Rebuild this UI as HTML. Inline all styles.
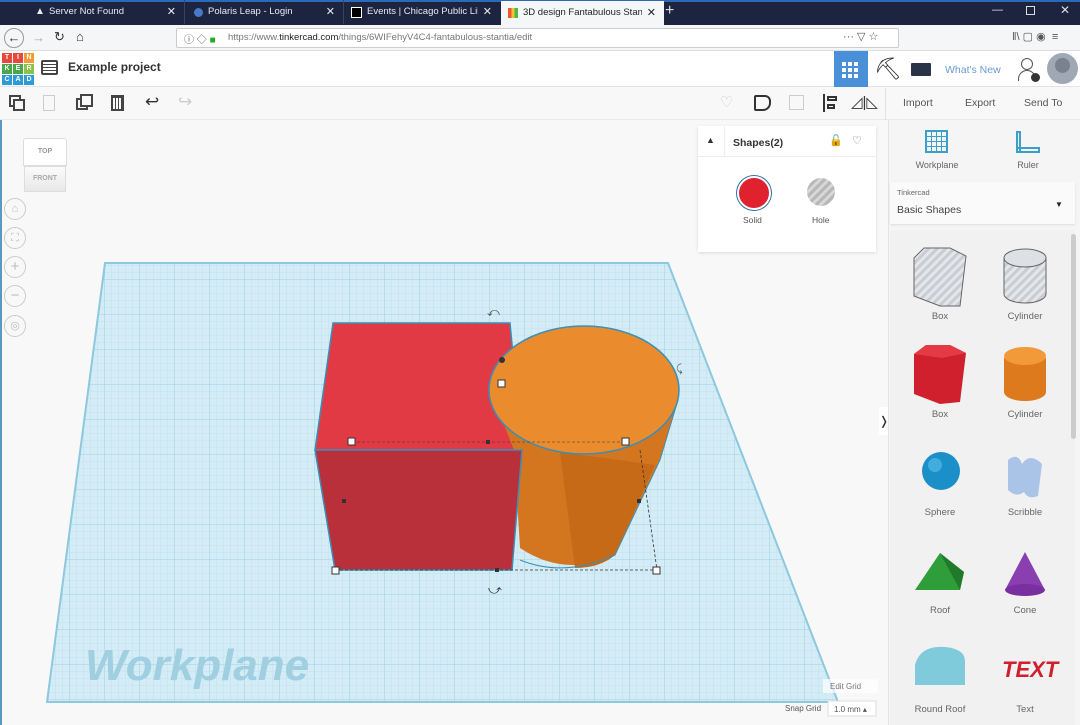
<!DOCTYPE html>
<html><head><meta charset="utf-8"><style>
*{box-sizing:border-box;margin:0;padding:0}
body{width:1080px;height:725px;overflow:hidden;font-family:"Liberation Sans",sans-serif;background:#f8f8f9;position:relative;font-size:11px;color:#333}
.abs{position:absolute}
.tab{position:absolute;top:0;height:24px;color:#e8eaf0;font-size:9.5px;line-height:24px;padding-left:22px;overflow:hidden;white-space:nowrap}
.tab .t{display:inline-block;overflow:hidden;width:calc(100% - 22px);vertical-align:top}
.tab .x{position:absolute;right:8px;top:0;font-size:11px}
.btn{position:absolute;color:#555;font-size:10.5px}
.lbl{position:absolute;font-size:9.5px;color:#666;text-align:center;width:80px}
</style></head><body>
<div class="abs" style="left:0;top:0;width:1080px;height:25px;background:#1d2440"></div>
<div class="abs" style="left:0;top:0;width:1080px;height:2px;background:#2a6ab8"></div>
<div class="tab" style="left:27px;width:158px;border-right:1px solid #3a4260"><span class="t">Server Not Found</span><span class="x">✕</span></div>
<div class="abs" style="left:35px;top:6px;color:#e8eaf0;font-size:10px">▲</div>
<div class="tab" style="left:186px;width:158px;border-right:1px solid #3a4260"><span class="t">Polaris Leap - Login</span><span class="x">✕</span></div>
<div class="abs" style="left:194px;top:8px;width:9px;height:9px;border-radius:50%;background:#4a78c8"></div>
<div class="tab" style="left:345px;width:155px"><span class="t">Events | Chicago Public Library</span><span class="x">✕</span></div>
<div class="abs" style="left:351px;top:7px;width:11px;height:11px;background:#000;border:1px solid #fff"></div>
<div class="tab" style="left:501px;width:163px;background:#f5f6f7;color:#222;top:1px;height:24px"><span class="t">3D design Fantabulous Stantia</span><span class="x">✕</span></div>
<div class="abs" style="left:508px;top:8px;width:10px;height:10px;background:linear-gradient(90deg,#e53 33%,#fb3 33% 66%,#4b4 66%)"></div>
<div class="abs" style="left:665px;top:2px;color:#ddd;font-size:16px">+</div>
<div class="abs" style="left:992px;top:4px;color:#ddd;font-size:11px">—</div>
<div class="abs" style="left:1026px;top:6px;width:9px;height:9px;border:1px solid #ddd"></div>
<div class="abs" style="left:1060px;top:3px;color:#ddd;font-size:12px">✕</div>
<div class="abs" style="left:0;top:25px;width:1080px;height:26px;background:#f5f6f7;border-bottom:1px solid #ddd"></div>
<div class="abs" style="left:4px;top:28px;width:20px;height:20px;border:1px solid #999;border-radius:50%;text-align:center;font-size:13px;line-height:18px;color:#333">←</div>
<div class="abs" style="left:32px;top:30px;color:#aaa;font-size:13px">→</div>
<div class="abs" style="left:54px;top:29px;color:#333;font-size:13px">↻</div>
<div class="abs" style="left:76px;top:29px;color:#333;font-size:13px">⌂</div>
<div class="abs" style="left:176px;top:28px;width:723px;height:20px;background:#fff;border:1px solid #ccc;border-radius:2px"></div>
<div class="abs" style="left:184px;top:31px;font-size:10px;color:#555">ⓘ ◇ <span style="color:#2a2">■</span></div>
<div class="abs" style="left:228px;top:32px;font-size:9.5px;color:#777">https://www.<span style="color:#222">tinkercad.com</span>/things/6WIFehyV4C4-fantabulous-stantia/edit</div>
<div class="abs" style="left:843px;top:30px;font-size:11px;color:#555">··· ▽ ☆</div>
<div class="abs" style="left:1012px;top:30px;font-size:11px;color:#555">ǁ\ ▢ ◉ &nbsp;≡</div>
<div class="abs" style="left:0;top:51px;width:1080px;height:36px;background:#fff;border-bottom:1px solid #e4e4e4"></div>
<div class="abs" style="left:2px;top:53px;width:30px;height:32px;display:grid;grid-template-columns:repeat(3,10px);grid-template-rows:repeat(3,10px);gap:1px;font-size:7px;font-weight:bold;color:#fff;text-align:center;line-height:10px">
<div style="background:#e8473b">T</div><div style="background:#e8473b">I</div><div style="background:#f29b32">N</div>
<div style="background:#4aa74a">K</div><div style="background:#4aa74a">E</div><div style="background:#8bc34a">R</div>
<div style="background:#2e9ad6">C</div><div style="background:#2e9ad6">A</div><div style="background:#2e9ad6">D</div></div>
<div class="abs" style="left:41px;top:60px;width:17px;height:15px;border:2px solid #444;border-radius:2px;background:repeating-linear-gradient(0deg,#fff 0 2px,#444 2px 3px)"></div>
<div class="abs" style="left:68px;top:60px;font-size:12px;font-weight:bold;color:#333">Example project</div>
<div class="abs" style="left:834px;top:51px;width:34px;height:36px;background:#4a90d9"></div>
<div class="abs" style="left:842px;top:60px;width:18px;height:18px;background:repeating-linear-gradient(90deg,#fff 0 4px,transparent 4px 6px),#4a90d9;"></div>
<div class="abs" style="left:842px;top:60px;width:18px;height:18px;background:repeating-linear-gradient(0deg,transparent 0 4px,#4a90d9 4px 6px)"></div>
<div class="abs" style="left:874px;top:56px;font-size:22px;color:#333">⛏</div>
<div class="abs" style="left:911px;top:63px;width:20px;height:13px;background:#2a3448;border-radius:1px"></div>
<div class="abs" style="left:945px;top:64px;font-size:10.5px;color:#6a9bd0">What's New</div>
<div class="abs" style="left:1021px;top:58px;width:12px;height:12px;border:1.5px solid #555;border-radius:50%"></div>
<div class="abs" style="left:1018px;top:70px;width:18px;height:11px;border:1.5px solid #555;border-radius:9px 9px 0 0;border-bottom:none"></div>
<div class="abs" style="left:1031px;top:73px;width:9px;height:9px;background:#333;border-radius:50%"></div>
<div class="abs" style="left:1047px;top:53px;width:31px;height:31px;border-radius:50%;background:radial-gradient(circle at 50% 40%,#7a8290 30%,#a0a8b4 32%)"></div>
<div class="abs" style="left:0;top:88px;width:1080px;height:32px;background:#f8f8f9;border-bottom:1px solid #e8e8e8"></div>
<div class="abs" style="left:9px;top:95px;width:12px;height:12px;border:2px solid #444"></div><div class="abs" style="left:13px;top:99px;width:12px;height:12px;border:2px solid #444;background:#f8f8f9"></div>
<div class="abs" style="left:43px;top:95px;width:12px;height:16px;border:1px solid #ccc"></div>
<div class="abs" style="left:76px;top:98px;width:12px;height:12px;border:2px solid #444"></div><div class="abs" style="left:80px;top:94px;width:13px;height:13px;border:2px solid #444;background:#f8f8f9"></div>
<div class="abs" style="left:111px;top:95px;width:13px;height:16px;border:2px solid #444;border-top-width:3px;background:repeating-linear-gradient(90deg,#fff 0 2px,#444 2px 3px)"></div>
<div class="abs" style="left:145px;top:92px;font-size:17px;color:#333">↩</div>
<div class="abs" style="left:178px;top:92px;font-size:17px;color:#ccc">↪</div>
<div class="abs" style="left:720px;top:93px;font-size:15px;color:#ccc">♡</div>
<div class="abs" style="left:754px;top:95px;width:17px;height:16px;border:2px solid #333;border-radius:2px 6px 8px 2px"></div>
<div class="abs" style="left:789px;top:95px;width:15px;height:15px;border:1px solid #ccc"></div>
<div class="abs" style="left:823px;top:94px;width:2px;height:18px;background:#333"></div><div class="abs" style="left:827px;top:96px;width:10px;height:5px;border:2px solid #333"></div><div class="abs" style="left:827px;top:104px;width:8px;height:5px;border:2px solid #333"></div>
<div class="abs" style="left:851px;top:93px;font-size:15px;color:#333">◿|◺</div>
<div class="abs" style="left:885px;top:88px;width:1px;height:32px;background:#e0e0e0"></div>
<div class="btn" style="left:903px;top:97px">Import</div>
<div class="btn" style="left:965px;top:97px">Export</div>
<div class="btn" style="left:1024px;top:97px">Send To</div>
<div class="abs" style="left:0;top:120px;width:2px;height:605px;background:#5a9ac0"></div>
<div class="abs" style="left:23px;top:138px;width:44px;height:28px;background:#fff;border:1px solid #ddd;font-size:7px;font-weight:bold;color:#999;text-align:center;line-height:26px;border-radius:3px 3px 0 0">TOP</div>
<div class="abs" style="left:24px;top:166px;width:42px;height:26px;background:linear-gradient(#fbfbfb,#e8e8e8);border:1px solid #ddd;font-size:7px;font-weight:bold;color:#aaa;text-align:center;line-height:24px">FRONT</div>
<div class="abs" style="left:4px;top:198px;width:22px;height:22px;border:1px solid #ccc;border-radius:50%;text-align:center;color:#bbb;line-height:20px">⌂</div>
<div class="abs" style="left:4px;top:227px;width:22px;height:22px;border:1px solid #ccc;border-radius:50%;text-align:center;color:#bbb;line-height:20px">⛶</div>
<div class="abs" style="left:4px;top:256px;width:22px;height:22px;border:1px solid #ccc;border-radius:50%;text-align:center;color:#bbb;line-height:20px;font-size:15px">+</div>
<div class="abs" style="left:4px;top:285px;width:22px;height:22px;border:1px solid #ccc;border-radius:50%;text-align:center;color:#bbb;line-height:20px;font-size:15px">−</div>
<div class="abs" style="left:4px;top:315px;width:22px;height:22px;border:1px solid #ccc;border-radius:50%;text-align:center;color:#bbb;line-height:20px">◎</div>
<svg class="abs" style="left:0;top:0" width="880" height="725">
<defs>
<pattern id="g" width="7" height="7" patternUnits="userSpaceOnUse"><rect width="7" height="7" fill="#d3ecf5"/><path d="M7 0V7M0 7H7" stroke="#b3dbea" stroke-width="0.6"/></pattern>
<pattern id="G" width="35" height="35" patternUnits="userSpaceOnUse"><path d="M35 0V35M0 35H35" stroke="#95cbe0" stroke-width="0.8"/></pattern>
<clipPath id="wp"><polygon points="105,263 668,263 838,702 47,702"/></clipPath>
</defs>
<g clip-path="url(#wp)"><rect x="40" y="260" width="800" height="445" fill="url(#g)"/><rect x="40" y="260" width="800" height="445" fill="url(#G)"/></g>
<polygon points="105,263 668,263 838,702 47,702" fill="none" stroke="#8cc8de" stroke-width="2"/>
<text x="85" y="680" font-family="Liberation Sans" font-style="italic" font-weight="bold" font-size="44" fill="#9fcfe0">Workplane</text>
<polygon points="333,323 510,323 522,450 315,450" fill="#e23a45" stroke="#3a8fb8" stroke-width="1.5"/>
<path d="M491,392 L514,450 L520,548 Q565,578 615,555 L660,460 L678,400 Z" fill="#d47620"/>
<path d="M560,452 L575,568 Q600,568 615,555 L655,465 Z" fill="#c66a18"/>
<ellipse cx="584" cy="390" rx="95" ry="64" fill="#ea8c2e" stroke="#3a8fb8" stroke-width="1.5"/>
<path d="M678,400 L660,460 L615,555 Q565,578 520,560" fill="none" stroke="#3a8fb8" stroke-width="1"/>
<polygon points="315,450 522,450 512,570 335,570" fill="#b9303a" stroke="#3a8fb8" stroke-width="1.5"/>
<polyline points="335,570 657,570 640,450" fill="none" stroke="#333" stroke-width="0.8" stroke-dasharray="3,2"/>
<line x1="352" y1="442" x2="626" y2="442" stroke="#333" stroke-width="0.6" stroke-dasharray="3,2"/>
<g fill="#fff" stroke="#333" stroke-width="1"><rect x="348" y="438" width="7" height="7"/><rect x="622" y="438" width="7" height="7"/><rect x="332" y="567" width="7" height="7"/><rect x="653" y="567" width="7" height="7"/><rect x="498" y="380" width="7" height="7"/></g>
<g fill="#333"><rect x="486" y="440" width="4" height="4"/><rect x="342" y="499" width="4" height="4"/><rect x="637" y="499" width="4" height="4"/><rect x="495" y="568" width="4" height="4"/><circle cx="502" cy="360" r="3"/></g>
<text x="487" y="316" font-size="12" fill="#444">⤺</text><text x="488" y="594" font-size="13" fill="#333">⤻</text>
<text x="676" y="372" font-size="11" fill="#555">⤹</text>
<rect x="823" y="679" width="55" height="14" fill="#fff" opacity=".7"/>
<text x="830" y="689" font-size="8" fill="#777" font-family="Liberation Sans">Edit Grid</text>
<text x="785" y="711" font-size="8" fill="#555" font-family="Liberation Sans">Snap Grid</text>
<rect x="828" y="701" width="48" height="15" fill="#fff" stroke="#ddd"/>
<text x="834" y="712" font-size="8" fill="#555" font-family="Liberation Sans">1.0 mm ▴</text>
</svg>
<div class="abs" style="left:698px;top:126px;width:178px;height:126px;background:#fff;box-shadow:0 1px 3px rgba(0,0,0,.12)"></div>
<div class="abs" style="left:698px;top:126px;width:178px;height:31px;border-bottom:1px solid #eee"></div>
<div class="abs" style="left:724px;top:126px;width:1px;height:31px;background:#eee"></div>
<div class="abs" style="left:706px;top:135px;font-size:9px;color:#333">▲</div>
<div class="abs" style="left:733px;top:137px;font-size:10.5px;font-weight:bold;color:#333">Shapes(2)</div>
<div class="abs" style="left:829px;top:134px;font-size:11px;color:#444">🔓</div>
<div class="abs" style="left:852px;top:134px;font-size:11px;color:#777">♡</div>
<div class="abs" style="left:737px;top:176px;width:34px;height:34px;border-radius:50%;background:#e0222f;border:2px solid #fff;box-shadow:0 0 0 1px #2d6aa8"></div>
<div class="abs" style="left:807px;top:178px;width:28px;height:28px;border-radius:50%;background:repeating-linear-gradient(135deg,#b8b8b8 0 3px,#d8d8d8 3px 6px)"></div>
<div class="abs" style="left:743px;top:215px;font-size:8.5px;color:#555">Solid</div>
<div class="abs" style="left:812px;top:215px;font-size:8.5px;color:#555">Hole</div>
<div class="abs" style="left:879px;top:407px;width:10px;height:28px;background:#fff;font-size:12px;line-height:28px;text-align:center">❭</div>
<div class="abs" style="left:888px;top:120px;width:192px;height:605px;background:#f5f5f6;border-left:1px solid #e4e4e4"></div>
<div class="abs" style="left:925px;top:130px;width:23px;height:23px;border:2px solid #3aa0c8;background:repeating-linear-gradient(90deg,transparent 0 4px,#3aa0c8 4px 5px),repeating-linear-gradient(0deg,transparent 0 4px,#3aa0c8 4px 5px)"></div>
<div class="abs" style="left:1016px;top:131px;width:5px;height:22px;border:2px solid #3aa0c8"></div><div class="abs" style="left:1016px;top:147px;width:24px;height:6px;border:2px solid #3aa0c8"></div>
<div class="lbl" style="left:897px;top:160px;font-size:9px">Workplane</div>
<div class="lbl" style="left:988px;top:160px;font-size:9px">Ruler</div>
<div class="abs" style="left:890px;top:182px;width:185px;height:42px;background:#fafafa;box-shadow:0 1px 2px rgba(0,0,0,.1)"></div>
<div class="abs" style="left:897px;top:188px;font-size:7.5px;color:#666">Tinkercad</div>
<div class="abs" style="left:897px;top:204px;font-size:10.5px;color:#444">Basic Shapes</div>
<div class="abs" style="left:1055px;top:200px;font-size:8px;color:#222">▼</div>
<div class="abs" style="left:890px;top:230px;width:185px;height:495px;background:#f1f1f2"></div>
<div class="abs" style="left:1071px;top:234px;width:5px;height:205px;background:#ccc;border-radius:3px"></div>
<svg class="abs" style="left:890px;top:230px" width="180" height="495">
<defs><pattern id="s" width="6" height="6" patternUnits="userSpaceOnUse" patternTransform="rotate(45)"><rect width="6" height="6" fill="#c9ccd2"/><rect width="3" height="6" fill="#e4e6ea"/></pattern></defs>
<polygon points="34,18 60,18 76,26 70,76 50,76 24,66 24,28" fill="url(#s)" stroke="#666" stroke-width="1"/>
<path d="M114,28V64A21,9 0 0 0 156,64V28" fill="url(#s)" stroke="#666"/><ellipse cx="135" cy="28" rx="21" ry="9" fill="#dde0e4" stroke="#666"/>
<polygon points="36,115 60,115 76,123 70,172 50,174 24,164 24,124" fill="#d0202d"/><polygon points="24,124 36,115 60,115 76,123 52,128" fill="#e43a45"/>
<path d="M114,128V162A21,9 0 0 0 156,162V128Z" fill="#de7a1e"/><ellipse cx="135" cy="126" rx="21" ry="9" fill="#f29a3a"/>
<circle cx="51" cy="241" r="19" fill="#1a8fc8"/><circle cx="45" cy="235" r="7" fill="#5fc0ee" opacity=".6"/>
<path d="M118,230 q10,-8 14,4 q8,-12 20,0 l-4,32 q-10,4 -14,-4 q-8,6 -16,-2z" fill="#a9c4e6"/>
<polygon points="25,360 50,323 74,342 70,360" fill="#2f9e3a"/><polygon points="50,323 74,342 70,360" fill="#1f7a2a"/>
<polygon points="135,322 115,360 155,360" fill="#8a3fb0"/><ellipse cx="135" cy="360" rx="20" ry="6" fill="#7a2fa0"/>
<path d="M25,455V435q5,-20 30,-18q20,2 20,14V455z" fill="#7fcbdc"/>
<text x="112" y="447" font-size="22" font-weight="bold" font-style="italic" fill="#d0202d" font-family="Liberation Sans">TEXT</text>
</svg>
<div class="lbl" style="left:900px;top:311px">Box</div><div class="lbl" style="left:985px;top:311px">Cylinder</div>
<div class="lbl" style="left:900px;top:409px">Box</div><div class="lbl" style="left:985px;top:409px">Cylinder</div>
<div class="lbl" style="left:900px;top:507px">Sphere</div><div class="lbl" style="left:985px;top:507px">Scribble</div>
<div class="lbl" style="left:900px;top:605px">Roof</div><div class="lbl" style="left:985px;top:605px">Cone</div>
<div class="lbl" style="left:900px;top:704px">Round Roof</div><div class="lbl" style="left:985px;top:704px">Text</div>
</body></html>
